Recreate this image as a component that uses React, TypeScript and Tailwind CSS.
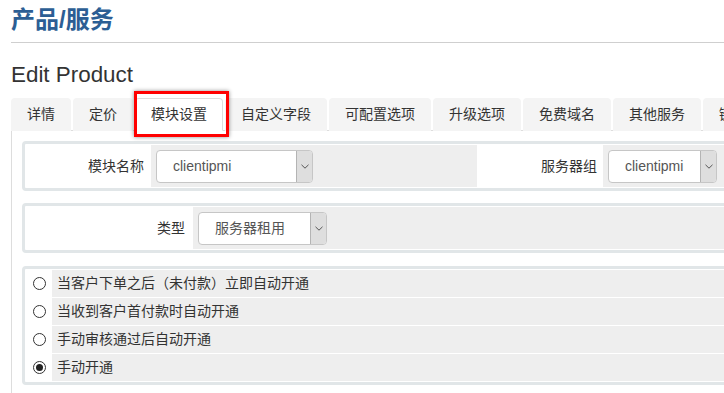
import React from "react";

const FONT = { fontFamily: '"Liberation Sans", "Noto Sans CJK SC", Arial, sans-serif' };

function Chevron() {
  return (
    <svg width="8" height="5" viewBox="0 0 8 5" fill="none">
      <path d="M0.5 0.8 L4 4.2 L7.5 0.8" stroke="#555" strokeWidth="1" />
    </svg>
  );
}

function Select({ value, width }: { value: string; width: number }) {
  return (
    <div
      className="flex h-[33px] shrink-0 overflow-hidden rounded-[4px] border border-[#c6c6c6] bg-white"
      style={{ width }}
    >
      <div className="flex flex-1 items-center whitespace-nowrap pl-4 text-[14px] text-[#555]">{value}</div>
      <div className="flex w-[16px] items-center justify-center border-l border-[#b4b4b4] bg-[#dedede]">
        <Chevron />
      </div>
    </div>
  );
}

function Radio({ checked }: { checked?: boolean }) {
  return (
    <div className="flex h-[13px] w-[13px] items-center justify-center rounded-full border border-[#333] bg-white">
      {checked && <div className="h-[7px] w-[7px] rounded-full bg-[#222]" />}
    </div>
  );
}

const tabs = ["详情", "定价", "模块设置", "自定义字段", "可配置选项", "升级选项", "免费域名", "其他服务", "链接"];

export default function App() {
  return (
    <div className="h-[393px] w-[724px] overflow-hidden bg-white" style={FONT}>
      <div className="w-[820px] pl-[11px]">
        <h1 className="pt-[7px] text-[24px] font-bold leading-[26px] text-[#2c5e94]">产品/服务</h1>
        <div className="mt-[9px] h-px w-full bg-[#cfcfcf]" />
        <h2 className="mt-[19px] text-[22.4px] leading-[26px] text-[#333]">Edit Product</h2>

        <div className="mt-[10px] flex items-end gap-[2px] border-b border-[#ddd]">
          {tabs.map((t) =>
            t === "模块设置" ? (
              <div
                key={t}
                className="relative -mb-px flex h-[33px] shrink-0 items-center whitespace-nowrap rounded-t-[4px] border border-[#ddd] border-b-white bg-white px-[15px] text-[14px] text-[#333]"
              >
                {t}
                <div className="pointer-events-none absolute left-[-2px] top-[-8px] z-10 h-[46px] w-[95px] border-[3px] border-[#f00] shadow-[0_0_4px_rgba(0,0,0,0.45)]" />
              </div>
            ) : (
              <div
                key={t}
                className="-mb-px flex h-[33px] shrink-0 items-center whitespace-nowrap rounded-t-[4px] border border-transparent bg-[#f4f4f4] px-[15px] text-[14px] text-[#333]"
              >
                {t}
              </div>
            )
          )}
        </div>

        <div className="border-l border-[#ddd] pl-[10px] pt-[10px] pb-[20px]">
          <div className="rounded-[4px] border-[3px] border-[#e1e6e8] p-[1px]">
            <div className="flex h-[42px]">
              <div className="flex w-[125px] items-center justify-end pr-[7px] text-[14px] text-[#333]">模块名称</div>
              <div className="flex w-[326px] items-center bg-[#eee] pl-[5px]">
                <Select value="clientipmi" width={157} />
              </div>
              <div className="flex w-[126px] items-center justify-end pr-[6px] text-[14px] text-[#333]">服务器组</div>
              <div className="flex flex-1 items-center bg-[#eee] pl-[5px]">
                <Select value="clientipmi" width={109} />
              </div>
            </div>
          </div>

          <div className="mt-[12px] rounded-[4px] border-[3px] border-[#e1e6e8] p-[1px]">
            <div className="flex h-[42px]">
              <div className="flex w-[167px] items-center justify-end pr-[8px] text-[14px] text-[#333]">类型</div>
              <div className="flex flex-1 items-center bg-[#eee] pl-[5px]">
                <Select value="服务器租用" width={129} />
              </div>
            </div>
          </div>

          <div className="mt-[13px] flex flex-col gap-[1px] rounded-[4px] border-[3px] border-[#e1e6e8] p-[1px]">
            {[
              ["当客户下单之后（未付款）立即自动开通", false],
              ["当收到客户首付款时自动开通", false],
              ["手动审核通过后自动开通", false],
              ["手动开通", true],
            ].map(([label, checked]) => (
              <div key={label as string} className="flex h-[27px]">
                <div className="flex w-[26px] items-center justify-center">
                  <Radio checked={checked as boolean} />
                </div>
                <div className="flex flex-1 items-center bg-[#eee] pl-[5px] text-[14px] text-[#333]">{label as string}</div>
              </div>
            ))}
          </div>
        </div>
      </div>
    </div>
  );
}
